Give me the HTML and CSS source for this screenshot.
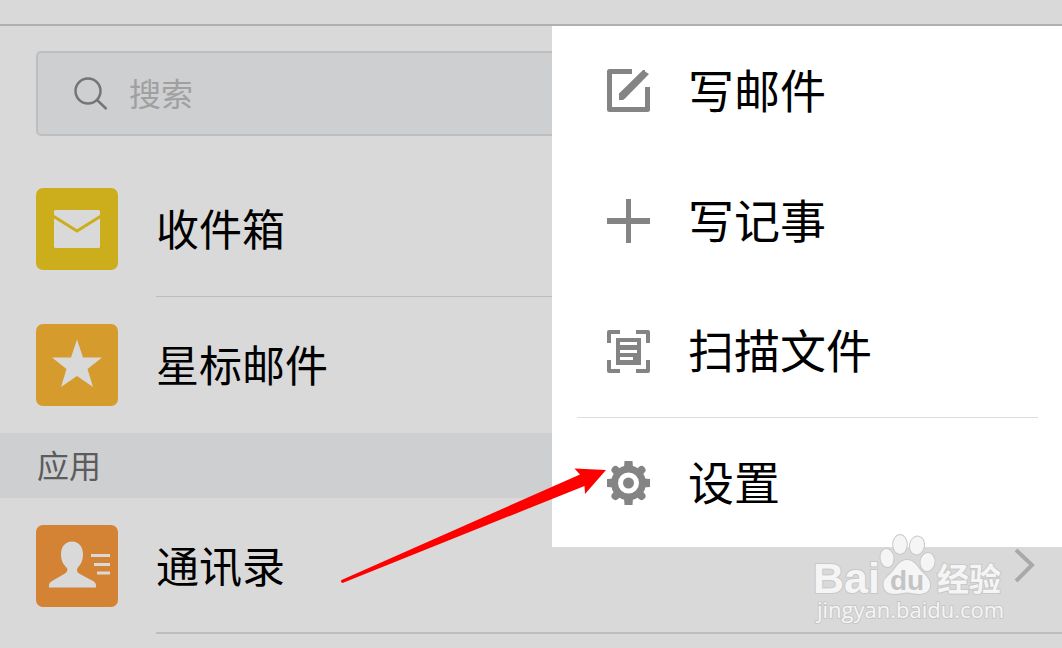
FILE: index.html
```html
<!DOCTYPE html>
<html lang="zh-CN">
<head>
<meta charset="utf-8">
<title>邮箱</title>
<link rel="stylesheet" href="styles.css">
</head>
<body>
<div class="app">
  <header class="topbar"></header>
  <main>
    <label class="search">
      <svg class="search-icon" viewBox="0 0 34 34" aria-hidden="true"><circle cx="14" cy="14" r="12.500"/><path d="M23 23 32.500 32"/></svg>
      <input class="search-input" type="text" placeholder="搜索" aria-label="搜索">
    </label>
    <nav>
      <a class="row" href="#inbox">
        <svg class="tile tile-yellow" viewBox="0 0 82 82" aria-hidden="true">
          <rect class="ink" x="18" y="22" width="46" height="38" rx="1.500"/>
          <path class="flap" d="M17 28 41 43 65 28"/>
        </svg>
        <span class="row-label">收件箱</span>
      </a>
      <a class="row" href="#starred">
        <svg class="tile tile-amber" viewBox="0 0 82 82" aria-hidden="true">
          <path class="ink" d="M41 15.500 47 33.500 66 33.500 51.500 45 57 63 41 52 25 63 30.500 45 16 33.500 35 33.500Z"/>
        </svg>
        <span class="row-label plain">星标邮件</span>
      </a>
      <h2 class="section">应用</h2>
      <a class="row" href="#contacts">
        <svg class="tile tile-orange" viewBox="0 0 82 82" aria-hidden="true">
          <path class="ink" d="M36 16.500C43 16.500 47 22 47 29.500C47 36 44.500 39.500 41.500 43C40.500 45 41 47 43 48.500L57 56Q60 57.500 60 60V62.500H13V60Q13 57.500 16 56L29 48.500C31 47 32 45 31 43C27.500 39.500 25 36 25 29.500C25 22 29 16.500 36 16.500Z"/>
          <path class="ink" d="M55 29H74V32H55ZM58 38H74V41H58ZM61 46.500H74V49.500H61Z"/>
        </svg>
        <span class="row-label strong">通讯录</span>
        <svg class="chevron" viewBox="0 0 22 38" aria-hidden="true"><path d="M3 3 19 18 3 34"/></svg>
      </a>
    </nav>
  </main>

  <div class="menu">
    <button class="menu-item" type="button">
      <svg class="menu-icon" viewBox="0 0 44 44" aria-hidden="true">
        <path class="line" d="M26 2.500H3.500V40.500H41.500V18"/>
        <path d="M13 24.500 37 1 39 1 39 2.500 43 5 19 29.500 17 31H13Z"/>
      </svg><span class="menu-text">写邮件</span></button>
    <button class="menu-item" type="button">
      <svg class="menu-icon" viewBox="0 0 44 44" aria-hidden="true">
        <path d="M20 0H25V19H44V25H25V44H20V25H1V19H20Z"/>
      </svg><span class="menu-text">写记事</span></button>
    <button class="menu-item" type="button">
      <svg class="menu-icon" viewBox="0 0 44 44" aria-hidden="true">
        <path class="bracket" d="M14 3H3V14M30 3H42V14M14 42H3V31M30 42H42V31"/>
        <path fill-rule="evenodd" d="M10 9H35V36H10ZM14 13V16H31V13ZM14 21V24H31V21ZM14 28V31H27V28Z"/>
      </svg><span class="menu-text">扫描文件</span></button>
    <hr class="menu-rule">
    <button class="menu-item last" type="button">
      <svg class="menu-icon" viewBox="0 0 44 44" aria-hidden="true">
        <circle class="gear-ring" cx="22.500" cy="22" r="14"/>
        <circle cx="22.500" cy="22" r="5.500"/>
        <path d="M18 7 18.500 0H26.500L27 7ZM18 37 18.500 44H26.500L27 37ZM8 17.500 1 18V26L8 26.500ZM37 17.500 44 18V26L37 26.500Z"/>
        <path class="tooth" d="M12 11.500 9.500 9M33 11.500 35.500 9M12 32.500 9.500 35M33 32.500 35.500 35"/>
      </svg><span class="menu-text">设置</span></button>
  </div>

  <svg class="arrow" viewBox="0 0 268 118" aria-hidden="true">
    <path d="M1.500 114 240 8.500 234.500 2.500 266 4 245 28 244.500 20 2.500 117Q0 116 1.500 114Z"/>
  </svg>

  <svg class="watermark" viewBox="0 0 200 94" role="img" aria-label="Baidu 经验 jingyan.baidu.com">
    <g class="mark">
      <ellipse cx="73" cy="28" rx="6.500" ry="9" transform="rotate(-8 73 28)"/>
      <ellipse cx="86" cy="14.500" rx="6.800" ry="9.500"/>
      <ellipse cx="103" cy="15.500" rx="7" ry="9" transform="rotate(10 103 15.500)"/>
      <ellipse cx="113.500" cy="32" rx="7" ry="9" transform="rotate(8 113.500 32)"/>
      <path d="M93 30C100 30 103 36 107 41C112 46 116.500 49 116 56C115.500 62 110 64 105 64C100 64 97 62.500 93 62.500C89 62.500 86 64 81 64C74 64 69.500 61 69.500 54C69.500 48 75 46 79 41C83 36 86 30 93 30Z"/>
      <text class="brand" x="-1" y="63">Bai</text>
      <text class="brand-cn" x="123" y="61">经验</text>
      <text class="site" x="3" y="88">jingyan.baidu.com</text>
    </g>
    <text class="brand-du" x="76" y="60">du</text>
  </svg>
</div>
</body>
</html>
```

FILE: styles.css
```css
* { box-sizing: border-box; }

body {
  margin: 0;
  background: #d9d9d9;
  color: #000;
  font-family: "Noto Sans CJK SC", sans-serif;
}

.app {
  position: relative;
  min-height: 100vh;
  overflow: hidden;
}

.topbar {
  height: 26px;
  border-bottom: 2px solid #b0b0b0;
}

.search {
  display: flex;
  align-items: center;
  gap: 21px;
  height: 85px;
  margin: 25px 36px;
  padding: 0 36px;
  background: #cecfd1;
  border: 2px solid #bdbebf;
  border-radius: 5px;
}

.search-icon {
  flex: none;
  width: 34px;
  height: 34px;
  fill: none;
  stroke: #757575;
  stroke-width: 2.5;
}

.search-input {
  flex: 1;
  min-width: 0;
  padding: 0 0 4px;
  border: 0;
  outline: 0;
  background: none;
  color: #333;
  font: 32px/48px "Noto Sans CJK SC", sans-serif;
}

.search-input::placeholder { color: #a0a0a1; opacity: 1; }

.row {
  display: flex;
  align-items: center;
  gap: 38px;
  height: 136px;
  padding-left: 36px;
  position: relative;
  color: inherit;
  text-decoration: none;
}

.tile {
  flex: none;
  width: 82px;
  height: 82px;
  border-radius: 7px;
}

.tile-yellow { background: #ccae1c; }
.tile-amber { background: #d59b2d; }
.tile-orange { background: #d48233; }
.ink { fill: #d9d9d9; }
.flap { fill: none; stroke: #ccae1c; stroke-width: 3; }

.row-label {
  flex: 1;
  height: 136px;
  border-bottom: 1px solid #bdbdbd;
  font-size: 43px;
  line-height: 132px;
}

.row-label.plain { border-bottom: 0; }
.row-label.strong { border-bottom-width: 2px; }

.chevron {
  position: absolute;
  right: 27px;
  width: 22px;
  height: 38px;
  fill: none;
  stroke: #a9a9ab;
  stroke-width: 4;
}

.section {
  height: 65px;
  margin: 0;
  padding-left: 37px;
  background: #cecfd1;
  color: #5c5c5c;
  font-size: 32px;
  font-weight: 400;
  line-height: 62px;
}

.menu {
  position: absolute;
  top: 26px;
  right: 0;
  width: 510px;
  background: #fff;
}

.menu-item {
  display: flex;
  align-items: center;
  gap: 38px;
  width: 100%;
  height: 130px;
  padding: 0 0 0 54px;
  border: 0;
  background: none;
  color: #000;
  font: 46px/64px "Noto Sans CJK SC", sans-serif;
}

.menu-item.last { height: 129px; }
.menu-text { padding-bottom: 6px; }

.menu-icon {
  flex: none;
  width: 44px;
  height: 44px;
  fill: #848484;
}

.line { fill: none; stroke: #848484; stroke-width: 5; stroke-linejoin: round; }
.bracket { fill: none; stroke: #848484; stroke-width: 4; stroke-linejoin: round; }
.gear-ring { fill: none; stroke: #848484; stroke-width: 7; }
.tooth { stroke: #848484; stroke-width: 8; stroke-linecap: round; }

.menu-rule {
  height: 1px;
  margin: 1px 24px 0 25px;
  border: 0;
  background: #dedede;
}

.arrow {
  position: absolute;
  top: 466px;
  left: 340px;
  width: 268px;
  height: 118px;
  fill: #f00;
}

.watermark {
  position: absolute;
  right: 48px;
  top: 530px;
  width: 200px;
  height: 94px;
}

.mark {
  fill: #f5f5f5;
  stroke: #c8c8c8;
  stroke-width: 2;
  paint-order: stroke;
}

.brand { font: bold 43px "Liberation Sans", sans-serif; }
.brand-cn { font: bold 32px "Noto Sans CJK SC", sans-serif; }
.site { font: 22px "Open Sans", sans-serif; }
.brand-du { font: bold 28px "Liberation Sans", sans-serif; fill: #c4c4c4; }
```
